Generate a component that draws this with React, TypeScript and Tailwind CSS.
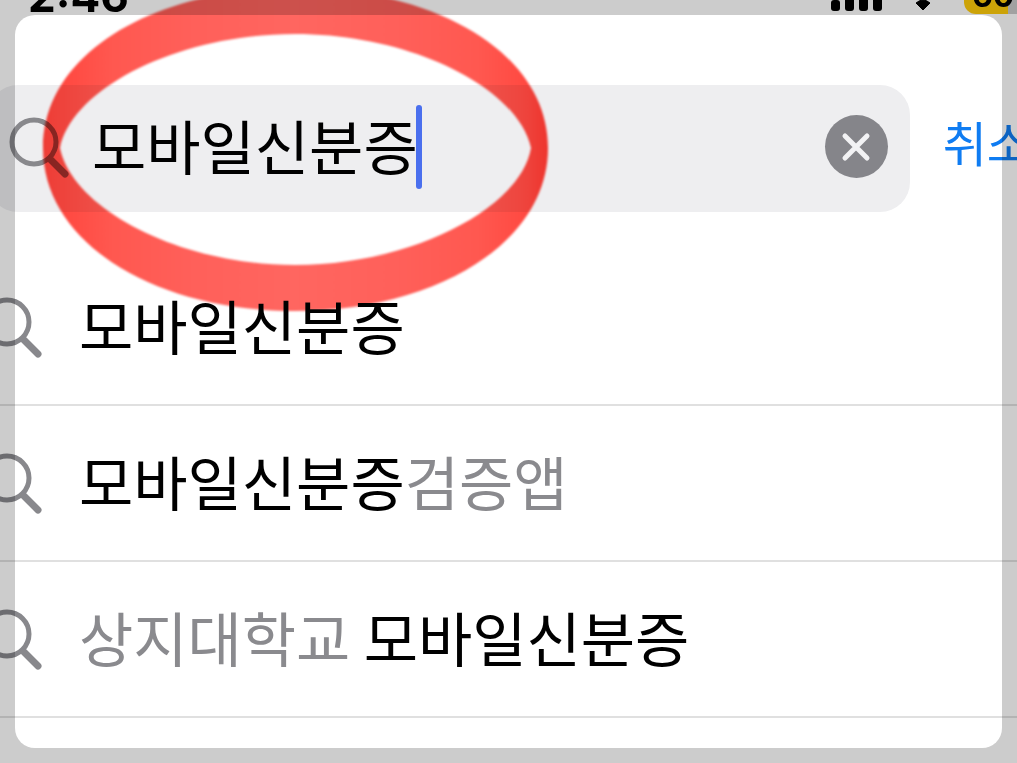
import { useState } from "react";

interface Part {
  text: string;
  match: boolean;
}

interface Suggestion {
  id: string;
  parts: Part[];
}

const suggestions: Suggestion[] = [
  { id: "1", parts: [{ text: "모바일신분증", match: true }] },
  {
    id: "2",
    parts: [
      { text: "모바일신분증", match: true },
      { text: "검증앱", match: false },
    ],
  },
  {
    id: "3",
    parts: [
      { text: "상지대학교 ", match: false },
      { text: "모바일신분증", match: true },
    ],
  },
];

function SearchIcon() {
  return (
    <svg className="size-16 shrink-0" viewBox="0 0 64 64" fill="none" aria-hidden="true">
      <circle cx="26" cy="27" r="22" stroke="#88888c" strokeWidth="5" />
      <path d="M43 45L57 59" stroke="#88888c" strokeWidth="7" strokeLinecap="round" />
    </svg>
  );
}

function StatusBar() {
  return (
    <div className="flow-root h-[85px] pl-7">
      <div className="-mt-8 flex h-11 items-end justify-between">
        <span className="pb-1 font-['Inter',sans-serif] text-[44px] leading-[24px] font-bold">2:46</span>
        <div className="-mr-8 flex items-end">
          <svg className="mr-[33px] h-9 w-[52px]" viewBox="0 0 52 36" aria-hidden="true">
            <rect x="0" y="24" width="9" height="11" rx="3" />
            <rect x="14" y="18" width="9" height="17" rx="3" />
            <rect x="28" y="10" width="9" height="25" rx="3" />
            <rect x="42" y="1" width="9" height="34" rx="3" />
          </svg>
          <svg className="mr-[34px] h-9 w-3.5 overflow-visible" viewBox="0 0 14 36" aria-hidden="true">
            <path d="M7 34L0 27Q7 21 14 27Z" strokeWidth="1" stroke="#000" strokeLinejoin="round" />
          </svg>
          <div className="-mb-0.5 flex h-10 w-[85px] items-end overflow-hidden rounded-[12px] bg-linear-to-r from-[#ffcc0a] from-[44px] to-[#cacaca] to-[44px] pl-2">
            <span className="font-['Inter',sans-serif] text-[32px] leading-[36px] font-bold">60%</span>
          </div>
        </div>
      </div>
    </div>
  );
}

function Marker() {
  return (
    <svg
      className="pointer-events-none absolute top-0 left-0 h-[320px] w-[600px] mix-blend-multiply"
      viewBox="0 0 600 320"
      aria-hidden="true"
    >
      <defs>
        <linearGradient id="ink" x1="43" x2="548" y1="0" y2="0" gradientUnits="userSpaceOnUse">
          <stop offset="0" stopColor="#ff4038" />
          <stop offset="0.05" stopColor="#ff4a42" />
          <stop offset="0.14" stopColor="#ff5850" />
          <stop offset="0.3" stopColor="#ff605a" />
          <stop offset="0.5" stopColor="#ff6660" />
          <stop offset="0.7" stopColor="#ff605a" />
          <stop offset="0.86" stopColor="#ff5850" />
          <stop offset="0.95" stopColor="#ff4a42" />
          <stop offset="1" stopColor="#ff3830" />
        </linearGradient>
        <filter id="soft" colorInterpolationFilters="sRGB">
          <feGaussianBlur stdDeviation="1" />
        </filter>
      </defs>
      <path
        fill="url(#ink)"
        fillRule="evenodd"
        filter="url(#soft)"
        d="M43 148C43 52 156 -12 295 -12S548 52 548 148S434 311 295 311S43 244 43 148Z
           M60 148C72 88 178 34 295 34S518 88 531 148C521 208 412 265 295 265S72 208 60 148Z"
      />
    </svg>
  );
}

export default function App() {
  const [query, setQuery] = useState("모바일신분증");

  return (
    <div className="relative h-screen overflow-hidden bg-white font-['Noto_Sans_CJK_KR',sans-serif] text-black">
      <StatusBar />

      <form className="-mr-3.5 -ml-3 flex items-center" onSubmit={(e) => e.preventDefault()}>
        <div className="flex h-[127px] min-w-0 flex-1 items-center rounded-[30px] bg-[#eeeef0] pr-[22px] pb-1 pl-5">
          <SearchIcon />
          <input
            type="text"
            aria-label="검색"
            value={query}
            onChange={(e) => setQuery(e.target.value)}
            className="ml-5 field-sizing-content h-[84px] bg-transparent pb-1 text-[59px] leading-[80px] caret-transparent outline-none"
          />
          <span className="-ml-0.5 h-[84px] w-1.5 shrink-0 rounded-full bg-[#4a6fee]" />
          <button
            type="button"
            aria-label="지우기"
            onClick={() => setQuery("")}
            className="ml-auto flex size-[63px] shrink-0 items-center justify-center rounded-full bg-[#85858a]"
          >
            <svg className="size-8" viewBox="0 0 32 32" fill="none" aria-hidden="true">
              <path d="M5 5L27 27M27 5L5 27" stroke="#f2f2f4" strokeWidth="5" strokeLinecap="round" />
            </svg>
          </button>
        </div>
        <button type="button" className="ml-[33px] shrink-0 pb-4 text-[48px] leading-[64px] text-[#0f7cf2]">
          취소
        </button>
      </form>

      <ul className="pt-[38px]">
        {suggestions.map((item) => (
          <li key={item.id} className="border-b-2 border-[#e0e0e0]">
            <button type="button" className="-ml-[19px] flex h-[154px] w-full items-center text-left">
              <SearchIcon />
              <span className="ml-[34px] pb-1 text-[59px] leading-[84px] whitespace-pre">
                {item.parts.map((part) => (
                  <span key={part.text} className={part.match ? "text-black" : "text-[#8a8a8e]"}>
                    {part.text}
                  </span>
                ))}
              </span>
            </button>
          </li>
        ))}
      </ul>

      <Marker />

      {/* dims everything outside the crop window */}
      <div className="pointer-events-none absolute inset-[15px] rounded-[20px] shadow-[0_0_0_40px_rgba(0,0,0,0.2)]" />
    </div>
  );
}
